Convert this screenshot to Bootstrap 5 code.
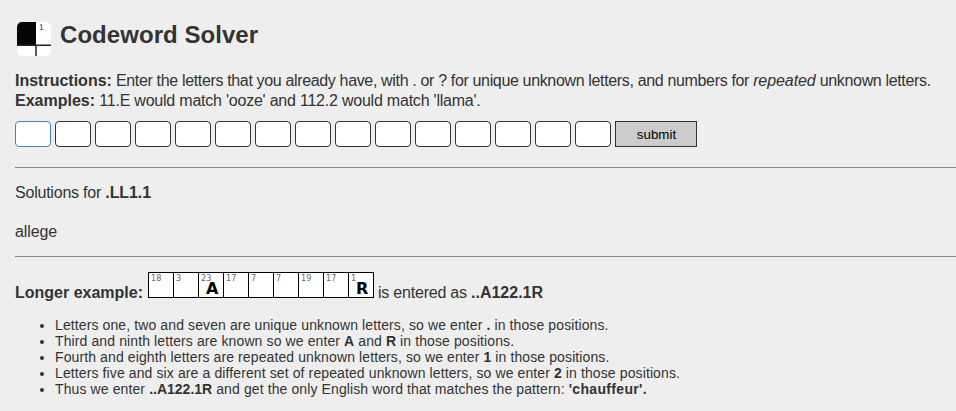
<!DOCTYPE html>
<html lang="en">
<head>
<meta charset="utf-8">
<title>Codeword Solver</title>
<link href="https://cdn.jsdelivr.net/npm/bootstrap@5.3.0/dist/css/bootstrap.min.css" rel="stylesheet">
<style>
body{background:#eee;color:#333;font-family:"Liberation Sans",Arial,sans-serif;font-size:16px;line-height:20px;overflow:hidden;letter-spacing:-.345px}
b{letter-spacing:0}
.page{padding:15px 0 0 15px}
.site-head{height:40px;gap:5px}
.site-head h1{font-size:24px;line-height:40px;letter-spacing:.05px}
.intro{margin-top:16px}
.intro i{letter-spacing:-.08px}
.examples,.solutions,.entered{letter-spacing:-.22px}
.entry{margin-top:10px;gap:4px}
.cell-input{width:36px;height:26px;border:1px solid #333;border-radius:4px;padding:0;background:#fff;text-align:center}
.cell-input.active{border-color:#3a87c8}
.cell-input:focus{outline:none;box-shadow:none}
.send{width:82px;height:26px;border:1px solid #333;border-radius:0;background:#ccc;color:#000;font-size:13.333px;line-height:24px;padding:1px 0 0 1px;letter-spacing:0}
.rule{border-top:1px solid #888}
.results{margin-top:20px}
.solutions{margin-top:15px}
.pattern{letter-spacing:-.1px}
.found{margin-top:19px;letter-spacing:-.1px}
.longer{margin-top:14px}
.longer-line{margin-top:15px}
.on-base{padding-top:11px}
.grid-word{width:226px;height:26px;margin:0 4px 0 5px}
.grid-word text{font-family:"DejaVu Sans",sans-serif;letter-spacing:0}
.grid-word .nums text{font-family:"DejaVu Sans Condensed","DejaVu Sans",sans-serif;font-stretch:condensed}
.notes{font-size:14px;line-height:16px;padding-left:40px;margin-top:14px;letter-spacing:.11px}
.notes b{letter-spacing:0}
.notes .answer{letter-spacing:.33px}
</style>
</head>
<body>
<main class="page">
<header class="site-head d-flex">
<svg width="40" height="41" viewBox="0 0 40 41">
<defs><clipPath id="round"><rect x="2" y="7" width="34" height="34" rx="5"/></clipPath></defs>
<g clip-path="url(#round)"><path fill="#fff" d="M2 7h34v34H2z"/><path fill="#050505" d="M2 7h19v23H2z"/><path fill="none" stroke="#222" stroke-width="1.5" d="M2 30.2h34M21 30v11"/></g>
<text x="24" y="15" font-size="7.5" font-family="DejaVu Sans" fill="#222">1</text>
</svg>
<h1 class="fw-bold mb-0">Codeword Solver</h1>
</header>
<p class="intro mb-0 text-nowrap"><b>Instructions:</b> Enter the letters that you already have, with . or ? for unique unknown letters, and numbers for <i>repeated</i> unknown letters.<br><span class="examples"><b>Examples:</b> 11.E would match 'ooze' and 112.2 would match 'llama'.</span></p>
<form class="entry d-flex" onsubmit="return false">
<input class="cell-input active" maxlength="1"><input class="cell-input" maxlength="1"><input class="cell-input" maxlength="1"><input class="cell-input" maxlength="1"><input class="cell-input" maxlength="1"><input class="cell-input" maxlength="1"><input class="cell-input" maxlength="1"><input class="cell-input" maxlength="1"><input class="cell-input" maxlength="1"><input class="cell-input" maxlength="1"><input class="cell-input" maxlength="1"><input class="cell-input" maxlength="1"><input class="cell-input" maxlength="1"><input class="cell-input" maxlength="1"><input class="cell-input" maxlength="1">
<button class="btn send">submit</button>
</form>
<section class="rule results">
<p class="mb-0 solutions">Solutions for <b class="pattern">.LL1.1</b></p>
<p class="mb-0 found">allege</p>
</section>
<section class="rule longer">
<div class="d-flex longer-line">
<b class="on-base">Longer example:</b>
<svg class="grid-word flex-shrink-0" viewBox="0 0 226 26">
<rect x=".5" y=".5" width="225" height="25" fill="#fff" stroke="#000"/>
<path stroke="#000" d="M25.5 0v26M50.5 0v26M75.5 0v26M100.5 0v26M125.5 0v26M150.5 0v26M175.5 0v26M200.5 0v26"/>
<g class="nums" font-size="9" fill="#666"><text x="3" y="9">18</text><text x="28" y="9">3</text><text x="53" y="9">23</text><text x="78" y="9">17</text><text x="103" y="9">7</text><text x="128" y="9">7</text><text x="153" y="9">19</text><text x="178" y="9">17</text><text x="203" y="9">1</text></g>
<g font-size="16" font-weight="700"><text x="58" y="22">A</text><text x="208" y="22">R</text></g>
</svg>
<span class="on-base entered">is entered as <b>..A122.1R</b></span>
</div>
<ul class="notes mb-0">
<li>Letters one, two and seven are unique unknown letters, so we enter <b>.</b> in those positions.</li>
<li>Third and ninth letters are known so we enter <b>A</b> and <b>R</b> in those positions.</li>
<li>Fourth and eighth letters are repeated unknown letters, so we enter <b>1</b> in those positions.</li>
<li>Letters five and six are a different set of repeated unknown letters, so we enter <b>2</b> in those positions.</li>
<li>Thus we enter <b>..A122.1R</b> and get the only English word that matches the pattern: <b class="answer">'chauffeur'.</b></li>
</ul>
</section>
</main>
<script src="https://cdn.jsdelivr.net/npm/bootstrap@5.3.0/dist/js/bootstrap.bundle.min.js"></script>
</body>
</html>
